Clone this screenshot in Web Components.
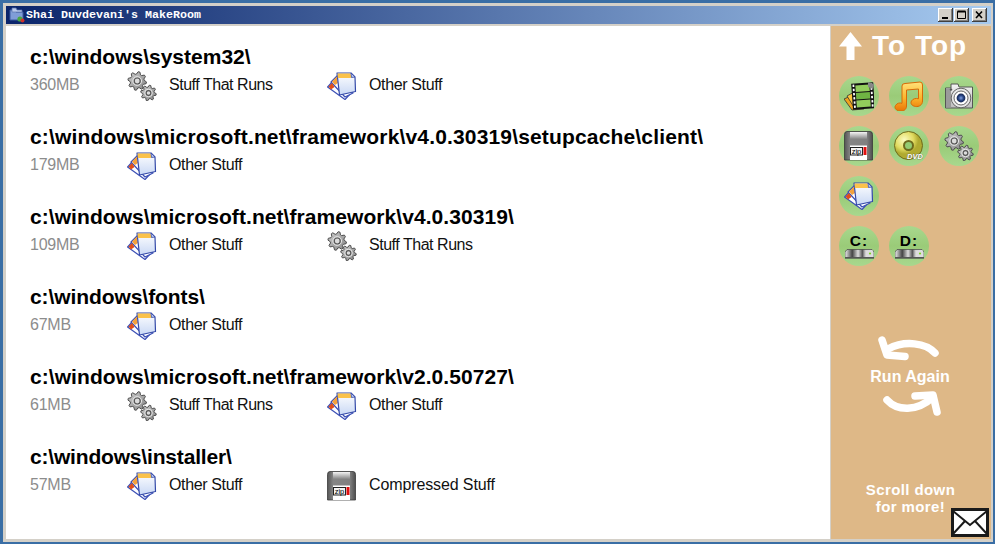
<!DOCTYPE html>
<html lang="en">
<head>
<meta charset="utf-8">
<title>MakeRoom</title>
<style>
html,body{margin:0;padding:0;width:995px;height:544px;overflow:hidden;background:#3a6ea5}
</style>
</head>
<body>
<template id="tpl-window">
<style>
:host{display:flex;flex-direction:column;box-sizing:border-box;width:995px;height:544px;background:#d4d0c8;border:solid #3a6ea5;border-width:3px 2px 2px 3px;padding:3px 2px 3px 3px;font-family:"Liberation Sans",Arial,sans-serif}
.body{display:flex;flex:1;min-height:0;margin-top:2px;background:#fff}
</style>
<slot name="title"></slot>
<div class="body"><slot></slot></div>
</template>

<template id="tpl-title">
<style>
:host{display:flex;align-items:center;height:18px;flex:none;background:linear-gradient(90deg,#0a246a,#a6caf0);color:#fff;font:bold 11.67px/18px "Liberation Mono",monospace}
.ico{width:16px;height:16px;margin:0 1px 0 3px;flex:none}
.t{flex:1;white-space:pre}
.btns{display:flex;margin-right:4px;align-items:center}
button{box-sizing:border-box;width:15px;height:14px;padding:0;margin:0 0 0 1px;background:#d4d0c8;border:0;box-shadow:inset -1px -1px #404040,inset 1px 1px #fff,inset -2px -2px #808080;display:block}
button.x{margin-left:3px}
svg{display:block}
</style>
<svg class="ico" viewBox="0 0 16 16"><path d="M1 3h5l1 2h7v8H1z" fill="#7f9dd8" stroke="#3d5a9e"/><path d="M3 1h4l1 2h5v2H3z" fill="#b8c9ec" stroke="#5a74b0" stroke-width=".7"/><circle cx="11" cy="12" r="2.6" fill="#49a942"/><circle cx="13.5" cy="13.5" r="2" fill="#d0312d"/></svg>
<span class="t"><slot></slot></span>
<div class="btns">
<button aria-label="Minimize"><svg width="15" height="14" viewBox="0 0 15 14"><rect x="4" y="9" width="6" height="2" fill="#000"/></svg></button>
<button aria-label="Maximize"><svg width="15" height="14" viewBox="0 0 15 14"><path d="M3.500 3.500h8v7h-8z" fill="none" stroke="#000"/><path d="M3.500 3.500h8" stroke="#000" stroke-width="2"/></svg></button>
<button class="x" aria-label="Close"><svg width="15" height="14" viewBox="0 0 15 14"><path d="M4 3.500l6 6.500M10 3.500l-6 6.500" stroke="#000" stroke-width="1.6"/></svg></button>
</div>
</template>

<template id="tpl-list">
<style>
:host{display:block;flex:1;min-width:0;padding:18px 0 0 24px;background:#fff;overflow:hidden}
</style>
<slot></slot>
</template>

<template id="tpl-row">
<style>
:host{display:block;height:80px;color:#000}
.path{font:bold 21px/26px "Liberation Sans",Arial,sans-serif;white-space:nowrap}
.sub{display:flex;align-items:center;height:30px;margin-top:1px}
.size{width:97px;flex:none;font-size:16px;letter-spacing:-.25px;color:#8c8c8c;position:relative;top:-1px}
</style>
<div class="path"></div>
<div class="sub"><span class="size"></span><slot></slot></div>
</template>

<template id="tpl-item">
<style>
:host{display:flex;align-items:center;width:200px;flex:none;font-size:16px;color:#111}
.l{margin-left:12px;position:relative;top:-1px;white-space:nowrap}
</style>
<app-icon></app-icon><span class="l"><slot></slot></span>
</template>

<template id="tpl-side">
<style>
:host{display:flex;flex-direction:column;width:161px;flex:none;background:#deb887;color:#fff;position:relative;border-left:1px solid #d4d0c8;box-sizing:border-box}
</style>
<slot></slot>
</template>

<template id="tpl-top">
<style>
:host{display:flex;align-items:center;height:40px;padding:0 0 0 8px;font:bold 28px/40px "Liberation Sans",Arial,sans-serif;letter-spacing:1px;color:#fff}
svg{display:block;margin-right:10px;flex:none}
</style>
<svg width="23" height="28" viewBox="0 0 23 28"><path d="M11.5 0L23 14.500H15.500V28H7.500V14.500H0Z" fill="#fff"/></svg>
<slot></slot>
</template>

<template id="tpl-grid">
<style>
:host{display:grid;grid-template-columns:repeat(3,40px);gap:10px;padding:10px 0 0 8px}
</style>
<slot></slot>
</template>

<template id="tpl-bubble">
<style>
:host{display:flex;flex-direction:column;align-items:center;justify-content:center;width:40px;height:40px;border-radius:50%;background:linear-gradient(#a8d88e,#9acb78 50%,#a8d88e);color:#000;font:bold 15.5px/16px "Liberation Sans",Arial,sans-serif;letter-spacing:1px}
</style>
<slot></slot>
</template>

<template id="tpl-run">
<style>
:host{display:grid;place-items:center;height:80px;margin-top:70px;padding-right:2px;font:bold 16px/18px "Liberation Sans",Arial,sans-serif;color:#fff}
svg,.t{grid-area:1/1}
.t{margin-top:2px}
svg{display:block}
</style>
<svg width="66" height="80" viewBox="877 336 66 80" fill="none" stroke="#fff" stroke-width="7.500" stroke-linecap="round" stroke-linejoin="round">
<path d="M935 353C926 343 905 340 888 349"/><path d="M882 340L887 355L905 356.500"/>
<path d="M887 400C897 411 917 412 933 397"/><path d="M915 396L933 395L937 412"/>
</svg>
<span class="t"><slot></slot></span>
</template>

<template id="tpl-scroll">
<style>
:host{display:block;margin-top:65px;padding-right:1px;text-align:center;font:bold 15px/17px "Liberation Sans",Arial,sans-serif;letter-spacing:.4px;color:#fff}
</style>
<slot></slot>
</template>

<template id="tpl-mail">
<style>
:host{position:absolute;right:2px;bottom:2px;width:38px;height:29px;display:block}
svg{display:block}
</style>
<svg width="38" height="29" viewBox="0 0 38 29"><rect x="1.500" y="1.500" width="35" height="26" fill="#fff" stroke="#1a1a1a" stroke-width="3"/><path d="M2 3L19 17L36 3M2 26L14 13M36 26L24 13" fill="none" stroke="#1a1a1a" stroke-width="2"/></svg>
</template>

<script>
function gear(cx,cy,ro,ri,teeth,fill,hole){
  var d='',n=teeth*4;
  for(var i=0;i<n;i++){
    var a=(i+.5)/n*Math.PI*2, r=(i%4<2)?ro:ri;
    d+=(i?'L':'M')+(cx+r*Math.cos(a)).toFixed(2)+' '+(cy+r*Math.sin(a)).toFixed(2);
  }
  d+='Z';
  return '<path d="'+d+'" fill="'+fill+'" stroke="#4e4e4e" stroke-width="1" stroke-linejoin="round"/>'+
  '<circle cx="'+cx+'" cy="'+cy+'" r="'+hole+'" fill="#dcdcdc" stroke="#555" stroke-width="1.200"/>'+
  '<circle cx="'+cx+'" cy="'+cy+'" r="'+(hole+1.4).toFixed(1)+'" fill="none" stroke="#e4e4e4" stroke-width="1"/>';
}
var DEFS={
gears:function(){return '<defs><linearGradient id="g" x1="0" y1="0" x2="1" y2="1"><stop offset="0" stop-color="#cfcfcf"/><stop offset="1" stop-color="#858585"/></linearGradient></defs>'+gear(10.2,10,9.300,7,8,'url(#g)',3)+gear(21.5,22,7.800,5.800,8,'url(#g)',2.400);},
docs:function(){return '<defs><linearGradient id="p" x1="0" y1="0" x2="0" y2="1"><stop offset="0" stop-color="#fff"/><stop offset="1" stop-color="#c9d8f5"/></linearGradient></defs>'+
'<path d="M.6 16L8 8L24 22L18 28.500Z" fill="#fff" stroke="#3b4fb5" stroke-width="1.200" stroke-linejoin="round"/>'+
'<path d="M4 11L11 4L26 22L18 26Z" fill="#fff" stroke="#3b4fb5" stroke-width="1.200" stroke-linejoin="round"/>'+
'<path d="M1.500 15.500L5 12L7.500 16L4 18.500Z" fill="#e0501a"/>'+
'<path d="M5 10.500L10 5.500L11 12L8 14Z" fill="#f3a13c"/>'+
'<path d="M10 2H24L28 6L28.500 20.500L12.500 24Z" fill="url(#p)" stroke="#3349a8" stroke-width="1.200" stroke-linejoin="round"/>'+
'<path d="M10.500 2.600H23.500L24.500 7H10.800Z" fill="#fbc24a"/>'+
'<path d="M24 2L24.500 6.500L28 6Z" fill="#b7c6ee" stroke="#3349a8" stroke-width=".8"/>';},
zip:function(){return '<defs><linearGradient id="z" x1="0" y1="0" x2="1" y2="0"><stop offset="0" stop-color="#555"/><stop offset=".2" stop-color="#858585"/><stop offset=".8" stop-color="#808080"/><stop offset="1" stop-color="#4e4e4e"/></linearGradient><linearGradient id="s" x1="0" y1="0" x2="0" y2="1"><stop offset="0" stop-color="#f4f4f4"/><stop offset="1" stop-color="#868686"/></linearGradient></defs>'+
'<path d="M3 .5H26Q28.500 .5 28.500 3.500V29H.5V3.500Q.5 .5 3 .5Z" fill="url(#z)" stroke="#3a3a3a" stroke-width=".8"/>'+
'<rect x="6" y="1" width="17" height="7" fill="url(#s)"/>'+
'<rect x="6" y="14.500" width="17" height="14.500" fill="#fff"/>'+
'<rect x="6.500" y="16.500" width="12" height="7.500" fill="#f4f4f4" stroke="#222" stroke-width="1"/>'+
'<rect x="19.500" y="16" width="3" height="8" fill="#e01010"/>'+
'<text x="12.500" y="22.700" text-anchor="middle" font-family="Liberation Sans,Arial,sans-serif" font-size="7.500" font-weight="normal" fill="#000">zip</text>';},
film:function(){var h='<path d="M0 18L9 14L20 28L8 29Z" fill="#f0a41e" stroke="#333" stroke-width=".8"/><path d="M3 15L12 10L23 25L11 28Z" fill="#fbc53b" stroke="#333" stroke-width=".8"/>'+
'<g transform="rotate(-4 18 14)"><rect x="8" y="2" width="22" height="26" fill="#111"/><rect x="12" y="4" width="14" height="6.500" fill="#92cd5c"/><rect x="12" y="11.500" width="14" height="6.500" fill="#6fb443"/><rect x="12" y="19" width="14" height="7" fill="#92cd5c"/>';
for(var i=0;i<6;i++){h+='<rect x="9.200" y="'+(3+i*4.2)+'" width="1.800" height="2.400" fill="#fff"/><rect x="27" y="'+(3+i*4.2)+'" width="1.800" height="2.400" fill="#fff"/>';}
return h+'</g><path d="M24 1L30 3L29 8L24 6Z" fill="#888"/>';},
music:function(){return '<defs><linearGradient id="m" x1="0" y1="0" x2="0" y2="1"><stop offset="0" stop-color="#ffe27a"/><stop offset=".55" stop-color="#fbb52c"/><stop offset="1" stop-color="#ea7305"/></linearGradient></defs>'+
'<path d="M8 5Q8 2.500 11 2.500L26 1Q28.500 1 28.500 4V20C28.500 24 25 26 21.500 25.500C18 25 16 22.500 17.500 20C19 17.500 22 17 24.500 17.800V8L12.500 9V25C12.500 29 9 30.500 5.500 30C2 29.500 0 27 1.500 24.500C3 22 6 21.500 8 22.300Z" fill="url(#m)" stroke="#d76a07" stroke-width="1" stroke-linejoin="round"/>';},
camera:function(){return '<defs><linearGradient id="c" x1="0" y1="0" x2="0" y2="1"><stop offset="0" stop-color="#f4f4f4"/><stop offset="1" stop-color="#bcbcbc"/></linearGradient><radialGradient id="l"><stop offset="0" stop-color="#7e9de0"/><stop offset=".6" stop-color="#25417f"/><stop offset="1" stop-color="#16264f"/></radialGradient></defs>'+
'<path d="M1.500 7H7V3H14L15 6H28.500V27H1.500Z" fill="url(#c)" stroke="#555" stroke-width="1"/><rect x="2" y="8" width="5" height="18.500" fill="#9a9a9a"/>'+
'<circle cx="17" cy="17" r="9.800" fill="#e9e9e9" stroke="#666" stroke-width="1"/><circle cx="17" cy="17" r="7" fill="#fff" stroke="#666" stroke-width="1"/><circle cx="17" cy="17" r="4.400" fill="url(#l)"/><circle cx="7" cy="8.500" r="1.200" fill="#555"/>';},
dvd:function(){return '<defs><radialGradient id="d" cx=".35" cy=".3"><stop offset="0" stop-color="#fbfbc0"/><stop offset=".65" stop-color="#e2dc62"/><stop offset="1" stop-color="#b0aa30"/></radialGradient></defs>'+
'<circle cx="14.500" cy="14.500" r="14" fill="url(#d)" stroke="#6e6a1c" stroke-width="1"/><circle cx="14.500" cy="14.500" r="4.500" fill="#93cb72" stroke="#6d6a1d" stroke-width="2"/>'+
'<text x="13" y="28" font-family="Liberation Sans,Arial,sans-serif" font-weight="bold" font-style="italic" font-size="7.500" fill="#fff" stroke="#6b6b3a" stroke-width=".7" paint-order="stroke">DVD</text>';},
drive:function(){return '<defs><linearGradient id="r" x1="0" y1="0" x2="1" y2="0"><stop offset="0" stop-color="#f0f0f0"/><stop offset=".25" stop-color="#444"/><stop offset=".45" stop-color="#ddd"/><stop offset=".6" stop-color="#555"/><stop offset=".7" stop-color="#ccc"/><stop offset="1" stop-color="#e8e8e8"/></linearGradient></defs>'+
'<path d="M2 .5H27L29 3V9H0V3Z" fill="url(#r)" stroke="#444" stroke-width=".7"/><rect x="0" y="8" width="29" height="1.500" fill="#555"/><rect x="21" y="1.500" width="7" height="6.500" fill="#ddd"/><circle cx="25" cy="4.500" r="1.100" fill="#7ed321"/>';}
};
function define(name,tpl,extra){
  customElements.define(name,class extends HTMLElement{
    constructor(){super();var r=this.attachShadow({mode:'open'});r.appendChild(document.getElementById(tpl).content.cloneNode(true));}
    connectedCallback(){if(extra)extra(this,this.shadowRoot);}
  });
}
customElements.define('app-icon',class extends HTMLElement{
  constructor(){super();this.attachShadow({mode:'open'});}
  static get observedAttributes(){return ['name'];}
  attributeChangedCallback(){this.render();}
  connectedCallback(){this.render();}
  render(){var n=this.getAttribute('name');if(!n||!DEFS[n])return;
    var w=n==='drive'?29:30,h=n==='drive'?10:30;
    this.shadowRoot.innerHTML='<style>:host{display:block;flex:none;width:'+w+'px;height:'+h+'px;letter-spacing:0}svg{display:block}</style><svg width="'+w+'" height="'+h+'" viewBox="0 0 '+w+' '+h+'">'+DEFS[n]()+'</svg>';}
});
define('win-frame','tpl-window');
define('win-title','tpl-title');
define('result-list','tpl-list');
define('result-row','tpl-row',function(e,r){var p=r.querySelector('.path');p.textContent=e.getAttribute('path');p.style.letterSpacing=(e.getAttribute('track')||0)+'px';r.querySelector('.size').textContent=e.getAttribute('size');});
var TRACK={gears:'-.47px',docs:'-.36px',zip:'-.12px'};
define('result-item','tpl-item',function(e,r){var n=e.getAttribute('icon');r.querySelector('app-icon').setAttribute('name',n);r.querySelector('.l').style.letterSpacing=TRACK[n]||'0';});
define('side-bar','tpl-side');
define('to-top','tpl-top');
define('icon-grid','tpl-grid');
define('icon-bubble','tpl-bubble');
define('run-again','tpl-run');
define('scroll-hint','tpl-scroll');
define('mail-button','tpl-mail');
</script>

<win-frame>
  <win-title slot="title">Shai Duvdevani's MakeRoom</win-title>
  <result-list>
    <result-row path="c:\windows\system32\" size="360MB">
      <result-item icon="gears">Stuff That Runs</result-item><result-item icon="docs">Other Stuff</result-item>
    </result-row>
    <result-row path="c:\windows\microsoft.net\framework\v4.0.30319\setupcache\client\" size="179MB" track=".16">
      <result-item icon="docs">Other Stuff</result-item>
    </result-row>
    <result-row path="c:\windows\microsoft.net\framework\v4.0.30319\" size="109MB" track=".065">
      <result-item icon="docs">Other Stuff</result-item><result-item icon="gears">Stuff That Runs</result-item>
    </result-row>
    <result-row path="c:\windows\fonts\" size="67MB" track="-.08">
      <result-item icon="docs">Other Stuff</result-item>
    </result-row>
    <result-row path="c:\windows\microsoft.net\framework\v2.0.50727\" size="61MB" track=".065">
      <result-item icon="gears">Stuff That Runs</result-item><result-item icon="docs">Other Stuff</result-item>
    </result-row>
    <result-row path="c:\windows\installer\" size="57MB" track="-.18">
      <result-item icon="docs">Other Stuff</result-item><result-item icon="zip">Compressed Stuff</result-item>
    </result-row>
  </result-list>
  <side-bar>
    <to-top>To Top</to-top>
    <icon-grid>
      <icon-bubble><app-icon name="film"></app-icon></icon-bubble>
      <icon-bubble><app-icon name="music"></app-icon></icon-bubble>
      <icon-bubble><app-icon name="camera"></app-icon></icon-bubble>
      <icon-bubble><app-icon name="zip"></app-icon></icon-bubble>
      <icon-bubble><app-icon name="dvd"></app-icon></icon-bubble>
      <icon-bubble><app-icon name="gears"></app-icon></icon-bubble>
      <icon-bubble><app-icon name="docs"></app-icon></icon-bubble>
      <span></span><span></span>
      <icon-bubble>C:<app-icon name="drive"></app-icon></icon-bubble>
      <icon-bubble>D:<app-icon name="drive"></app-icon></icon-bubble>
    </icon-grid>
    <run-again>Run Again</run-again>
    <scroll-hint>Scroll down<br>for more!</scroll-hint>
    <mail-button></mail-button>
  </side-bar>
</win-frame>
</body>
</html>
